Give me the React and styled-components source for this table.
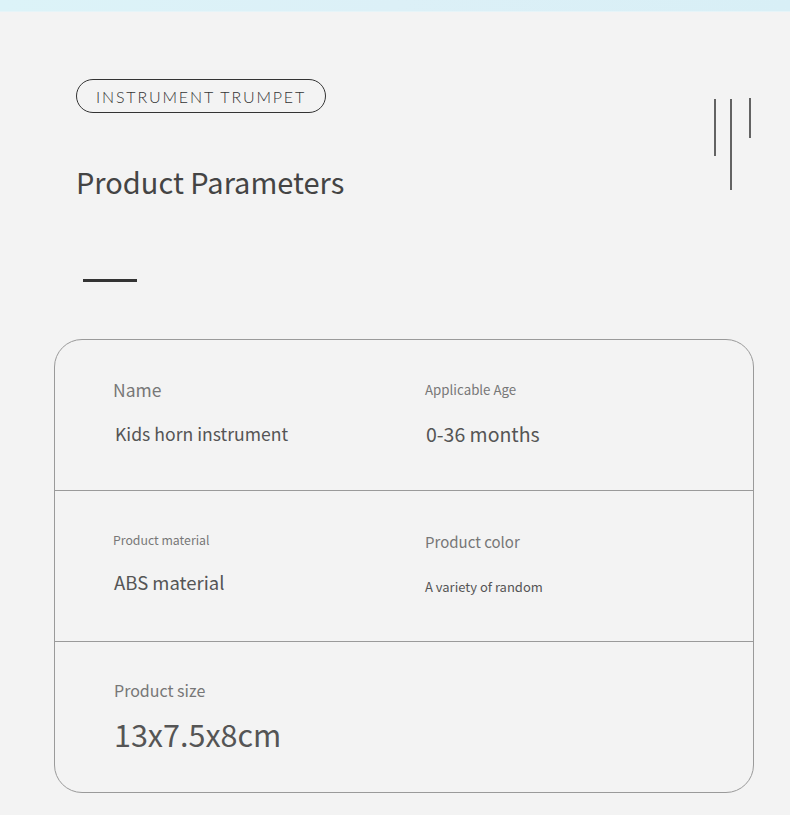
import React from 'react';
import styled, { createGlobalStyle } from 'styled-components';

const GlobalStyle = createGlobalStyle`
  body {
    margin: 0;
    background: #f3f3f3;
    font-family: "Noto Sans CJK SC", "Noto Sans", sans-serif;
  }
`;

const Page = styled.div`
  width: 790px;
  height: 815px;
  background: #f3f3f3;
  overflow: hidden;
`;

const TopBand = styled.div`
  height: 11px;
  background: linear-gradient(90deg, #dcf3f8 0%, #dcf0f7 50%, #d8eff6 100%);
  border-bottom: 1px solid #e6f4f8;
`;

const Header = styled.div`
  display: flex;
  justify-content: space-between;
  padding: 67px 39px 0 76px;
`;

const HeaderLeft = styled.div`
  display: flex;
  flex-direction: column;
  align-items: flex-start;
`;

const Pill = styled.div`
  height: 32px;
  padding: 0 19px;
  border: 1px solid #333;
  border-radius: 17px;
  display: flex;
  align-items: center;
  font-family: "Lato", "Noto Sans", sans-serif;
  font-weight: 300;
  font-size: 16px;
  letter-spacing: 1.85px;
  color: #333;
`;

const Title = styled.h1`
  margin: 54px 0 0;
  font-size: 29px;
  line-height: 29px;
  font-weight: 400;
  color: #444;
`;

const Deco = styled.svg`
  margin-top: 19px;
`;

const Dash = styled.div`
  width: 54px;
  height: 3px;
  background: #333;
  margin: 83px 0 0 83px;
`;

const Card = styled.div`
  margin: 57px 0 0 54px;
  width: 698px;
  border: 1px solid #9a9a9a;
  border-radius: 28px;
`;

const Row = styled.div`
  display: grid;
  grid-template-columns: 312px 1fr;
  height: 150px;
  padding-left: 58px;
  border-top: ${p => (p.$first ? 'none' : '1px solid #9a9a9a')};
`;

const Cell = styled.div`
  display: flex;
  flex-direction: column;
  padding-top: ${p => p.$pad}px;
`;

const Label = styled.div`
  font-size: ${p => p.$size}px;
  line-height: 20px;
  color: #777;
  margin-left: ${p => p.$shift || 0}px;
`;

const Value = styled.div`
  font-size: ${p => p.$size}px;
  line-height: 30px;
  color: #555;
  margin-top: ${p => p.$gap}px;
  margin-left: ${p => p.$shift || 0}px;
`;

const rows = [
  [
    { label: 'Name', ls: 17.5, value: 'Kids horn instrument', vs: 17.6, pad: 40, gap: 19, vshift: 2 },
    { label: 'Applicable Age', ls: 13.3, value: '0-36 months', vs: 19.5, pad: 40, gap: 19, vshift: 1 },
  ],
  [
    { label: 'Product material', ls: 12.3, value: 'ABS material', vs: 18.5, pad: 39, gap: 17, vshift: 1 },
    { label: 'Product color', ls: 15, value: 'A variety of random', vs: 13, pad: 41, gap: 20 },
  ],
  [
    { label: 'Product size', ls: 16, value: '13x7.5x8cm', vs: 30.5, pad: 38, gap: 19, shift: 1 },
    null,
  ],
];

export default function App() {
  return (
    <Page>
      <GlobalStyle />
      <TopBand />
      <Header>
        <HeaderLeft>
          <Pill>INSTRUMENT TRUMPET</Pill>
          <Title>Product Parameters</Title>
        </HeaderLeft>
        <Deco width="40" height="95" viewBox="0 0 40 95">
          <line x1="4" y1="1" x2="4" y2="58" stroke="#333" strokeWidth="1.5" />
          <line x1="20" y1="1" x2="20" y2="92" stroke="#333" strokeWidth="1.5" />
          <line x1="39" y1="0" x2="39" y2="40" stroke="#333" strokeWidth="1.5" />
        </Deco>
      </Header>
      <Dash />
      <Card>
        {rows.map((cells, i) => (
          <Row key={i} $first={i === 0}>
            {cells.map((c, j) =>
              c ? (
                <Cell key={j} $pad={c.pad}>
                  <Label $size={c.ls} $shift={c.shift}>{c.label}</Label>
                  <Value $size={c.vs} $gap={c.gap} $shift={c.vshift ?? c.shift}>{c.value}</Value>
                </Cell>
              ) : (
                <div key={j} />
              )
            )}
          </Row>
        ))}
      </Card>
    </Page>
  );
}
